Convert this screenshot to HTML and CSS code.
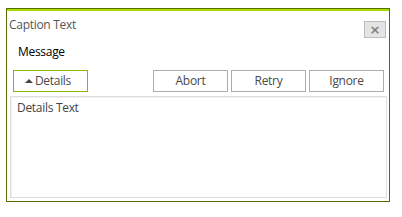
FILE: index.html
```html
<!DOCTYPE html>
<html lang="en">
<head>
    <meta charset="UTF-8">
    <title>Message Box</title>
    <link rel="stylesheet" href="styles.css">
</head>
<body>

<div class="window">
    <div class="titlebar">
        <div class="caption">Caption Text</div>
        <div class="close-btn">&times;</div>
    </div>

    <div class="message">Message</div>

    <div class="button-row">
        <div class="btn btn-details"><span class="arrow"></span>Details</div>
        <div class="btn-group">
            <div class="btn">Abort</div>
            <div class="btn">Retry</div>
            <div class="btn">Ignore</div>
        </div>
    </div>

    <div class="details-box">Details Text</div>
</div>

</body>
</html>
```

FILE: styles.css
```css
* {
    margin: 0;
    padding: 0;
    box-sizing: border-box;
}

body {
    background: #fff;
    font-family: "Open Sans", "Noto Sans", sans-serif;
    font-size: 12px;
}

.window {
    margin: 8px 0 0 6px;
    width: 384px;
    height: 194px;
    border: 1px solid #566d00;
    box-shadow: inset 0 2px 0 #aadc00;
    padding-top: 2px;
    display: flex;
    flex-direction: column;
}

.titlebar {
    display: flex;
    justify-content: space-between;
    align-items: flex-start;
    height: 30px;
    padding: 6px 3px 0 2px;
}

.caption {
    line-height: 16px;
    color: #555;
    letter-spacing: -0.3px;
}

.close-btn {
    margin-top: 4px;
    width: 22px;
    height: 17px;
    border: 1px solid #bcbcbc;
    background: #e4e4e4;
    color: #808080;
    font-family: "DejaVu Sans", sans-serif;
    font-size: 13px;
    font-weight: bold;
    line-height: 15px;
    text-align: center;
}

.message {
    margin-top: 3px;
    padding-left: 11px;
    line-height: 16px;
    color: #000;
    letter-spacing: -0.3px;
}

.button-row {
    display: flex;
    justify-content: space-between;
    margin-top: 10px;
    padding: 0 5px 0 6px;
}

.btn-group {
    display: flex;
    gap: 3px;
}

.btn {
    width: 75px;
    height: 22px;
    border: 1px solid #acacac;
    color: #4a4a4a;
    line-height: 20px;
    text-align: center;
    letter-spacing: -0.3px;
}

.btn-details {
    border-color: #8cb800;
    padding-right: 5px;
}

.arrow {
    display: inline-block;
    width: 0;
    height: 0;
    border-left: 4px solid transparent;
    border-right: 4px solid transparent;
    border-bottom: 4px solid #444;
    margin-right: 2px;
    vertical-align: 2px;
}

.details-box {
    margin: 4px 0 0 3px;
    width: 377px;
    height: 102px;
    border: 1px solid #dedede;
    box-shadow: inset 1px 1px 0 #f2f2f2;
    padding: 3px 6px;
    line-height: 16px;
    color: #444;
    letter-spacing: -0.3px;
}
```
